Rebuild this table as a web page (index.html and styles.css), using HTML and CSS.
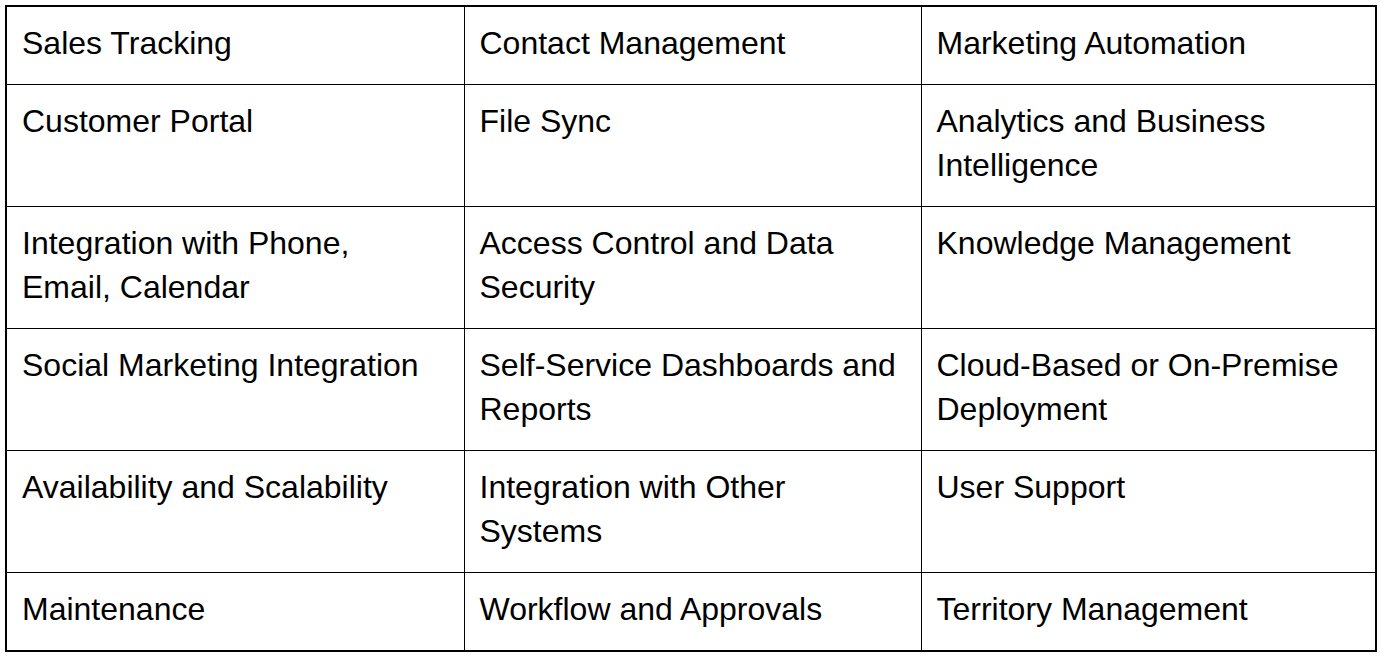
FILE: index.html
```html
<!DOCTYPE html>
<html>
<head>
<meta charset="utf-8">
<link rel="stylesheet" href="styles.css">
</head>
<body>
<table class="features">
  <colgroup>
    <col class="c1"><col class="c2"><col class="c3">
  </colgroup>
  <tbody>
    <tr><td>Sales Tracking</td><td>Contact Management</td><td>Marketing Automation</td></tr>
    <tr><td>Customer Portal</td><td>File Sync</td><td>Analytics and Business Intelligence</td></tr>
    <tr><td>Integration with Phone, Email, Calendar</td><td>Access Control and Data Security</td><td>Knowledge Management</td></tr>
    <tr><td>Social Marketing Integration</td><td>Self-Service Dashboards and Reports</td><td>Cloud-Based or On-Premise Deployment</td></tr>
    <tr><td>Availability and Scalability</td><td>Integration with Other Systems</td><td>User Support</td></tr>
    <tr><td>Maintenance</td><td>Workflow and Approvals</td><td>Territory Management</td></tr>
  </tbody>
</table>
</body>
</html>
```

FILE: styles.css
```css
html, body {
  margin: 0;
  padding: 0;
  background: #ffffff;
}
body {
  padding: 5px 0 0 5px;
  font-family: "Liberation Sans", Arial, sans-serif;
  color: #000000;
}
.features {
  border-collapse: collapse;
  table-layout: fixed;
  width: 1370px;
  border: 2px solid #000;
}
.features .c1 { width: 458px; }
.features .c2 { width: 457px; }
.features .c3 { width: 455px; }
.features td {
  border: 1px solid #000;
  padding: 14px 20px 19px 15px;
  font-size: 32px;
  line-height: 44px;
  vertical-align: top;
  text-align: left;
}
```
